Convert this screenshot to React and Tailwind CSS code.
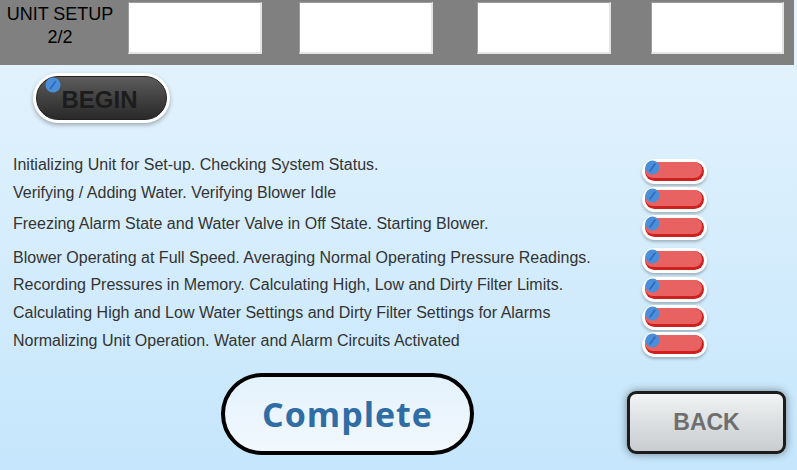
import React from 'react';

const steps = [
  { text: 'Initializing Unit for Set-up. Checking System Status.', row: 'h-[28px]', tog: 'mt-[3px]' },
  { text: 'Verifying / Adding Water. Verifying Blower Idle', row: 'h-[31px]', tog: 'mt-[3px]' },
  { text: 'Freezing Alarm State and Water Valve in Off State. Starting Blower.', row: 'h-[34px]', tog: 'mt-0' },
  { text: 'Blower Operating at Full Speed. Averaging Normal Operating Pressure Readings.', row: 'h-[27px]', tog: '-mt-[1px]' },
  { text: 'Recording Pressures in Memory. Calculating High, Low and Dirty Filter Limits.', row: 'h-[28px]', tog: 'mt-[1px]' },
  { text: 'Calculating High and Low Water Settings and Dirty Filter Settings for Alarms', row: 'h-[28px]', tog: 'mt-[1px]' },
  { text: 'Normalizing Unit Operation. Water and Alarm Circuits Activated', row: 'h-[25px]', tog: 'mt-0' },
];

function Knob({ size = 15 }) {
  return (
    <svg width={size} height={size} viewBox="0 0 16 16">
      <circle cx="8" cy="8" r="7.5" fill="#4b8fdb" />
      <line x1="10.5" y1="4.5" x2="5.5" y2="11.5" stroke="#2f6cc0" strokeWidth="2" strokeLinecap="round" />
    </svg>
  );
}

function Toggle({ className }) {
  return (
    <div className={`relative w-[65px] h-[25px] rounded-full bg-white p-[3px] shadow-[0_2px_3px_rgba(0,0,0,0.25)] ${className}`}>
      <div className="h-full w-full rounded-full bg-[#cf1f1f] pb-[3px] pr-[2px]">
        <div className="h-full w-full rounded-full bg-[#e96262]" />
      </div>
      <div className="absolute left-[3px] top-[1px]">
        <Knob />
      </div>
    </div>
  );
}

export default function App() {
  return (
    <div className="w-[797px] h-[470px] overflow-hidden bg-gradient-to-b from-[#e6f4fd] to-[#c5e6fc] font-['Liberation_Sans',Arial,sans-serif]">
      {/* header */}
      <div className="flex items-start w-[794px] h-[65px] bg-[#808080] pt-[2px]">
        <div className="w-[128px] pr-[8px] pt-[1px] text-center text-[18px] leading-[23px] text-black">
          UNIT SETUP<br />2/2
        </div>
        <div className="w-[134px] h-[52px] bg-white border-t border-l border-[#9c9c9c] border-b-2 border-r-2 border-b-[#e4e4e4] border-r-[#e4e4e4]" />
        <div className="ml-[37px] w-[134px] h-[52px] bg-white border-t border-l border-[#9c9c9c] border-b-2 border-r-2 border-b-[#e4e4e4] border-r-[#e4e4e4]" />
        <div className="ml-[44px] w-[134px] h-[52px] bg-white border-t border-l border-[#9c9c9c] border-b-2 border-r-2 border-b-[#e4e4e4] border-r-[#e4e4e4]" />
        <div className="ml-[40px] w-[133px] h-[52px] bg-white border-t border-l border-[#9c9c9c] border-b-2 border-r-2 border-b-[#e4e4e4] border-r-[#e4e4e4]" />
      </div>

      {/* begin */}
      <div className="relative ml-[33px] mt-[8px] w-[137px] h-[50px] rounded-full bg-white p-[3px] shadow-[0_2px_4px_rgba(0,0,0,0.3)]">
        <div className="flex h-full w-full items-center justify-center rounded-full bg-gradient-to-b from-[#5c5c5c] via-[#444] via-45% to-[#2a2a2a] border border-[#222]">
          <span className="pr-[4px] pt-[3px] text-[24px] font-bold text-[#1c1c1c]">BEGIN</span>
        </div>
        <div className="absolute left-[12px] top-[4px]">
          <Knob size={16} />
        </div>
      </div>

      {/* steps */}
      <div className="mt-[33px]">
        {steps.map((s) => (
          <div key={s.text} className={`flex items-start ${s.row}`}>
            <div className="w-[642px] shrink-0 pl-[13px] text-[16px] leading-[18px] text-[#333]">{s.text}</div>
            <Toggle className={s.tog} />
          </div>
        ))}
      </div>

      {/* bottom buttons */}
      <div className="flex items-start mt-[16px]">
        <div className="ml-[221px] w-[253px] h-[82px] rounded-full border-4 border-black bg-gradient-to-b from-[#e4f2fc] via-[#ebf5fd] to-[#f1f8fe] flex items-center justify-center">
          <span className="text-[34px] font-bold tracking-[1px] text-[#2f6da4] font-['Open_Sans',sans-serif]">Complete</span>
        </div>
        <div className="ml-[153px] mt-[18px] w-[159px] h-[63px] rounded-[9px] border-[3px] border-[#1c1c1c] bg-gradient-to-b from-[#f1f3f4] via-[#dcdfe1] to-[#c9cdd0] shadow-[0_0_8px_rgba(0,0,0,0.45)] flex items-center justify-center">
          <span className="text-[23px] font-bold text-[#6e6e6e]">BACK</span>
        </div>
      </div>
    </div>
  );
}
